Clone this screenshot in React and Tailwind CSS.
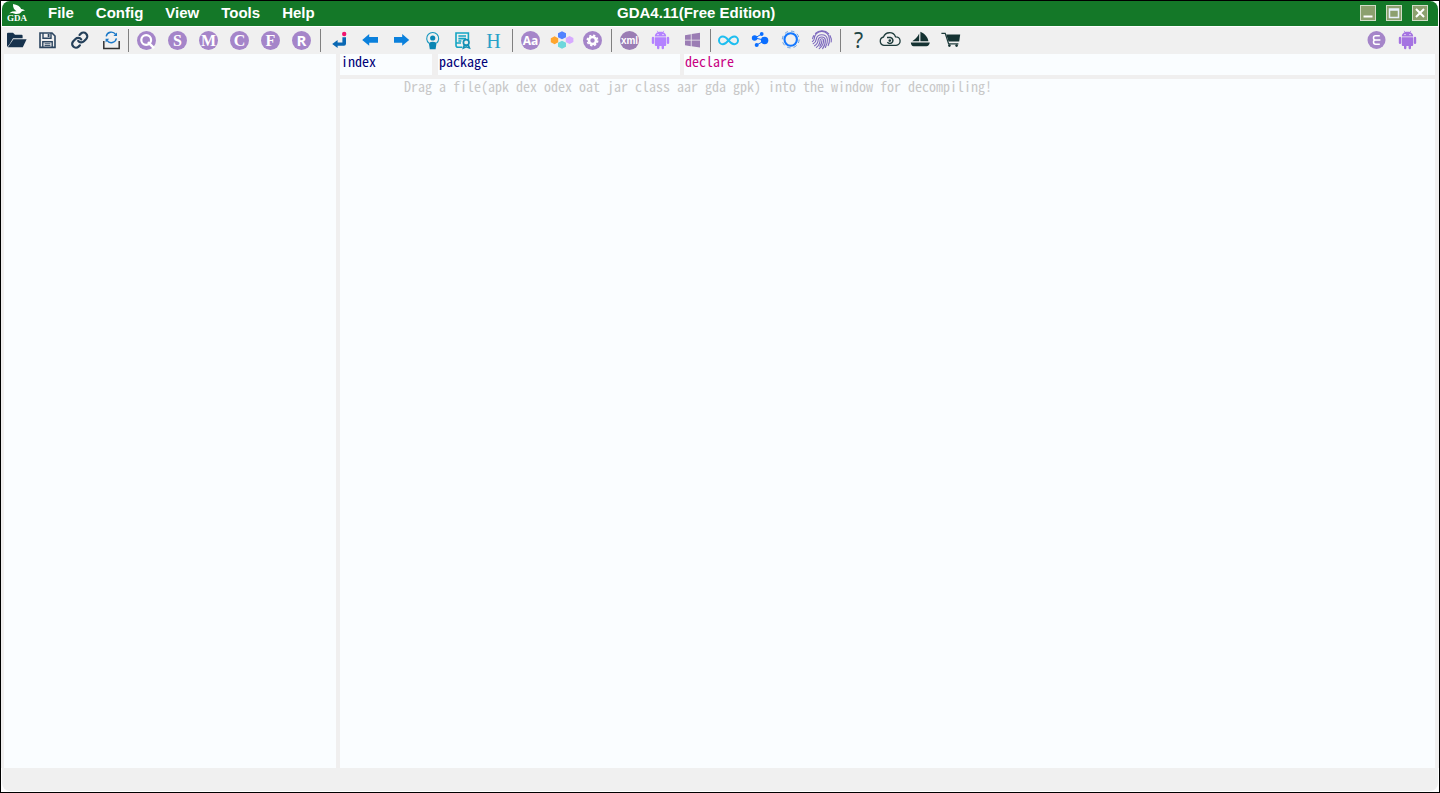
import React from 'react';

const Icon = ({ children }) => (
    <svg width="21" height="21" viewBox="0 0 21 21" fill="none" className="overflow-visible" aria-hidden="true">
        {children}
    </svg>
);

const Badge = ({ children, className = 'bg-[#a585c9]' }) => (
    <span className={`flex h-[19px] w-[19px] items-center justify-center rounded-full font-bold leading-none text-white ${className}`}>
        {children}
    </span>
);

const serif = "bg-[#a585c9] font-['Liberation_Serif',serif] text-[16px]";

const Android = ({ color }) => (
    <Icon>
        <g fill={color}>
            <path d="M4.8 6.6C4.8 3.6 7.2 1.8 10.5 1.8s5.7 1.8 5.7 4.8z" />
            <path d="M7.2 0.8l1.2 2M13.8 0.8l-1.2 2" stroke={color} strokeWidth="0.8" />
            <path d="M4.8 7.2h11.4v7.800a1 1 0 0 1-1 1H5.8a1 1 0 0 1-1-1z" />
            <rect x="1.800" y="6.800" width="2.4" height="7.200" rx="1.2" />
            <rect x="16.8" y="6.800" width="2.4" height="7.200" rx="1.2" />
            <rect x="7" y="14" width="2.4" height="5.2" rx="1.2" />
            <rect x="11.6" y="14" width="2.4" height="5.2" rx="1.2" />
        </g>
        <circle cx="8" cy="4.6" r="0.7" fill="#fff" />
        <circle cx="13" cy="4.6" r="0.7" fill="#fff" />
    </Icon>
);

const groups = [
    [
        {
            label: 'Open',
            icon: (
                <Icon>
                    <path fill="#17324d" d="M1 3.8a1 1 0 0 1 1-1h5l2 2h6.6a1 1 0 0 1 1 1v2.4H7L3.4 14.4 1 17z" />
                    <path fill="#17324d" d="M7.4 9.2h13.2l-3.8 8H1.8z" />
                </Icon>
            ),
        },
        {
            label: 'Save',
            icon: (
                <Icon>
                    <path stroke="#2c4560" strokeWidth="1.6" d="M3 3h12l3 3v11.4H3z" />
                    <path stroke="#2c4560" strokeWidth="1.4" d="M6 3v5.2h8V3M5.8 17.4v-5.6h9.4v5.6" />
                    <path stroke="#2c4560" strokeWidth="1.8" d="M11.6 4v3" />
                    <path stroke="#2c4560" strokeWidth="1" d="M7.6 13.8h5.8M7.6 15.6h5.8" />
                </Icon>
            ),
        },
        {
            label: 'Link',
            icon: (
                <Icon>
                    <g transform="translate(2.6 1) scale(.76)" stroke="#24405a" strokeWidth="2.9" strokeLinecap="round">
                        <path d="M10 13a5 5 0 0 0 7.54.54l3-3a5 5 0 0 0-7.07-7.07l-1.72 1.71" />
                        <path d="M14 11a5 5 0 0 0-7.54-.54l-3 3a5 5 0 0 0 7.07 7.07l1.71-1.71" />
                    </g>
                </Icon>
            ),
        },
        {
            label: 'Reload',
            icon: (
                <Icon>
                    <path stroke="#333" strokeWidth="1.5" d="M4.800 11v7.400h15.400V11" />
                    <path stroke="#1a78c8" strokeWidth="1.4" d="M7.2 6.4a5.2 5.2 0 0 1 9.400-2M17.400 8.400a5.2 5.2 0 0 1-9.400 2" />
                    <path fill="#1a78c8" d="M18 2.400v3.600h-3.600zM6.600 12.400V8.800h3.600z" />
                </Icon>
            ),
        },
    ],
    [
        {
            label: 'Search',
            icon: (
                <Icon>
                    <circle cx="10.5" cy="10.5" r="9.5" fill="#a585c9" />
                    <circle cx="10.2" cy="10" r="4.9" stroke="#fff" strokeWidth="2.2" />
                    <path stroke="#fff" strokeWidth="2.6" d="M12 12.2l6 6" />
                </Icon>
            ),
        },
        { label: 'Strings', icon: <Badge className={serif}>S</Badge> },
        { label: 'Methods', icon: <Badge className={serif}>M</Badge> },
        { label: 'Classes', icon: <Badge className={serif}>C</Badge> },
        { label: 'Fields', icon: <Badge className={serif}>F</Badge> },
        { label: 'References', icon: <Badge className="bg-[#a585c9] font-['Open_Sans',sans-serif] text-[15px]">R</Badge> },
    ],
    [
        {
            label: 'Go to',
            icon: (
                <Icon>
                    <circle cx="16.2" cy="4" r="2.2" fill="#f0146e" />
                    <path fill="#0a68b4" d="M14.4 7.2h3.6v6.6a2 2 0 0 1-2 2H9.6v2.2L4.2 14l5.4-4v2.4h4.8z" />
                </Icon>
            ),
        },
        { label: 'Back', icon: <Icon><path fill="#0a80dc" d="M3.2 9.9l7-5.8v3H19v5.6h-8.8v3z" /></Icon> },
        { label: 'Forward', icon: <Icon><path fill="#0a80dc" d="M19.2 9.9l-7-5.8v3H4v5.6h8.2v3z" /></Icon> },
        {
            label: 'Entry point',
            icon: (
                <Icon>
                    <path stroke="#1496be" strokeWidth="1.1" d="M8 13.2a6 6 0 1 1 7.400 0" />
                    <circle cx="11.7" cy="8" r="2.6" fill="#0a86b4" />
                    <path fill="#0a86b4" d="M8 14c0-1.500 1.4-2.2 3.7-2.2s3.7.7 3.7 2.2L14.600 19.200H8.8z" />
                </Icon>
            ),
        },
        {
            label: 'Certificate',
            icon: (
                <Icon>
                    <path stroke="#14a5c3" strokeWidth="1.6" d="M10.4 17.2H6a2 2 0 0 1-2-2V3h12.4v7M4 13h5" />
                    <path stroke="#14a5c3" strokeWidth="1.6" d="M6.4 6h7.6M6.4 8.6h7.6M6.4 11h3" />
                    <circle cx="14.2" cy="12.4" r="2.8" stroke="#1490b4" strokeWidth="1.7" />
                    <path stroke="#1490b4" strokeWidth="1.6" d="M12.400 14.8l-1 3.2 2.8-1.2 3.200 1.2-1.2-3.2" />
                </Icon>
            ),
        },
        { label: 'Hex', icon: <span className="font-['Liberation_Serif',serif] text-[20px] leading-none text-[#28a0c8]">H</span> },
    ],
    [
        { label: 'Font', icon: <Badge className="bg-[#a585c9] font-['Open_Sans',sans-serif] text-[12px]">Aa</Badge> },
        {
            label: 'Call graph',
            icon: (
                <Icon>
                    <path fill="#ffa52d" d="M3.6 6.2l3.6 2v4l-3.6 2-3.8-2v-4z" />
                    <path fill="#5082ff" d="M11 1.2l4 2v4l-4 2-4-2v-4z" />
                    <path fill="#6ed7dc" d="M11 10.8l4 2v4l-4 2-4-2v-4z" />
                    <path fill="#d7aaff" d="M18.6 6l3.8 2v4l-3.8 2-3.8-2V8z" />
                </Icon>
            ),
        },
        {
            label: 'Settings',
            icon: (
                <Icon>
                    <circle cx="10.5" cy="10.5" r="9.5" fill="#a585c9" />
                    <circle cx="10.5" cy="10.5" r="3.5" stroke="#fff" strokeWidth="2.6" />
                    <circle cx="10.5" cy="10.5" r="5.200" stroke="#fff" strokeWidth="1.6" strokeDasharray="2.2 1.884" />
                </Icon>
            ),
        },
    ],
    [
        { label: 'Manifest xml', icon: <Badge className="bg-[#9b7db4] font-['Liberation_Sans',sans-serif] text-[10px]">xml</Badge> },
        { label: 'APK info', icon: <Android color="#b482ff" /> },
        { label: 'Windows', icon: <Icon><path fill="#9b7db4" d="M4 5.2l5.8-1v5.6H4zM10.6 4l8.4-1.2v7h-8.4zM4 10.6h5.8v5.6l-5.8-1zM10.6 10.6H19v6.8l-8.4-1.2z" /></Icon> },
    ],
    [
        {
            label: 'Loop',
            icon: (
                <Icon>
                    <path stroke="#1ebef0" strokeWidth="2" d="M10.5 10.4C8.4 7.8 6.8 6.6 4.8 6.6a3.8 3.8 0 0 0 0 7.6c2 0 3.6-1.2 5.7-3.8 2.1-2.6 3.7-3.8 5.7-3.8a3.8 3.8 0 0 1 0 7.6c-2 0-3.6-1.2-5.7-3.8z" />
                </Icon>
            ),
        },
        {
            label: 'Data flow',
            icon: (
                <Icon>
                    <path stroke="#0a6eff" strokeWidth="1" d="M12.7 4L6 8l10 2.3L7.7 15" />
                    <g fill="#0a6eff">
                        <circle cx="5.600" cy="8" r="2.800" />
                        <circle cx="12.7" cy="4" r="1.9" />
                        <circle cx="15.600" cy="10.5" r="3.7" />
                        <circle cx="7.7" cy="15" r="2" />
                    </g>
                </Icon>
            ),
        },
        {
            label: 'Scan',
            icon: (
                <Icon>
                    <circle cx="10.7" cy="9.5" r="6.2" stroke="#1478ff" strokeWidth="2.100" />
                    <circle cx="10.7" cy="9.5" r="8.4" stroke="#5a96dc" strokeWidth="0.9" strokeDasharray="3.6 3" />
                </Icon>
            ),
        },
        {
            label: 'Fingerprint',
            icon: (
                <Icon>
                    <g stroke="#7d69be" strokeWidth="1.1" strokeLinecap="round">
                        <path d="M4.4 3.4a9.4 9.4 0 0 1 13.4.4M1.6 8.6a9.4 9.4 0 0 1 1.2-3M19 5.6a9.4 9.4 0 0 1 1.2 6.4" />
                        <path d="M1.4 11.6c1.2-.6 1.6-1.4 1.8-2.6A7.6 7.6 0 0 1 18.4 9c.2 2.4-.2 4.6-1.2 6.6" />
                        <path d="M2.2 13.8c2-1 2.8-2.4 3-4.4a5.7 5.7 0 0 1 11.2 0c.2 3-.6 5.6-2 8" />
                        <path d="M3.6 15.8c2.4-1.4 3.4-3.4 3.6-6a3.7 3.7 0 0 1 7.2 0c.2 3.4-.8 6.2-2.8 8.8" />
                        <path d="M5.4 17.4c2.6-2 3.6-4.4 3.7-7.2a1.8 1.8 0 0 1 3.5 0c0 3.4-1.4 6.2-4.4 8.4" />
                        <path d="M10.9 10.6c0 2.2-.8 4-2 5.6" />
                    </g>
                </Icon>
            ),
        },
    ],
    [
        { label: 'Help', icon: <span className="font-['Noto_Sans',sans-serif] text-[21px] leading-none text-[#1e4646]">?</span> },
        {
            label: 'Cloud update',
            icon: (
                <Icon>
                    <path stroke="#1e3c3c" strokeWidth="1.3" d="M4.800 15.4a4.3 4.3 0 0 1-.3-8.4 6.4 6.4 0 0 1 12-.2 4.3 4.3 0 0 1 .6 8.6z" />
                    <path stroke="#1e3c3c" strokeWidth="1.5" d="M8 7.6h3.400a3 3 0 1 1-3 4.6" />
                    <circle cx="10.8" cy="10.6" r="1.3" fill="#1e3c3c" />
                </Icon>
            ),
        },
        {
            label: 'Home page',
            icon: (
                <Icon>
                    <path fill="#143232" d="M9.2 3.6v7.6H2.2c2.8-1.6 5.4-4.2 7-7.6zM10.4 1.8c4 1.6 7.4 5 8 9.4h-8z" />
                    <path fill="#143232" d="M.8 12.4h19c-.4 2-1.6 3.8-3.4 3.8H3.6C2 16.2 1 14.6.8 12.4z" />
                </Icon>
            ),
        },
        {
            label: 'Buy',
            icon: (
                <Icon>
                    <path stroke="#1e3c3c" strokeWidth="1.2" d="M.4 3.4h3.8l3.4 10.4h9.8" />
                    <path fill="#143232" d="M5.2 4.4h14l-1 7.2H7.6z" />
                    <circle cx="8.4" cy="15.6" r="1.3" fill="#143232" />
                    <circle cx="15.6" cy="15.6" r="1.3" fill="#143232" />
                </Icon>
            ),
        },
    ],
];

const rightTools = [
    {
        label: 'Engine',
        icon: (
            <Icon>
                <circle cx="10.5" cy="10" r="9" fill="#a585c9" />
                <path stroke="#fff" strokeWidth="1.5" d="M13.800 5.800H9.600a2.100 2.100 0 0 0 0 4.200h4.800M9.600 10a2.100 2.100 0 0 0 0 4.200h4.200" />
            </Icon>
        ),
    },
    { label: 'Device', icon: <Android color="#a573e1" /> },
];

const menus = ['File', 'Config', 'View', 'Tools', 'Help'];

const windowControls = [
    { label: 'Minimize', shape: <path d="M3.5 11.500h9" stroke="#fff" strokeWidth="2" /> },
    { label: 'Maximize', shape: <path d="M3.5 4h9v8.5h-9zM3.5 5h9" stroke="#e6f0fa" strokeWidth="1.5" /> },
    { label: 'Close', shape: <path d="M4 4l8 8M12 4l-8 8" stroke="#fff" strokeWidth="2" /> },
];

const ToolButton = ({ tool }) => (
    <button type="button" aria-label={tool.label} className="flex h-[27px] w-[31px] shrink-0 items-center justify-center">
        {tool.icon}
    </button>
);

const Logo = () => (
    <div className="relative h-[19px] w-[22px]">
        <svg width="22" height="12" viewBox="0 0 22 12" aria-hidden="true">
            <path fill="#fff" d="M7 0c4.2.6 7.2 2.4 8.2 5 1.4.2 3 .8 4 2-1.6-.4-2.8-.2-3.6.6-1 2-3 2.6-6 2.4L6.4 9l-3.200.200 3-1.6 4.400-.4C8.2 6 6.8 3.4 7 0z" />
        </svg>
        <span className="absolute bottom-px left-px font-['Liberation_Serif',serif] text-[9px] font-bold leading-[8px] text-white">GDA</span>
    </div>
);

const App = () => {
    return (
        <div className="flex h-screen flex-col border border-black bg-white">
            {/* Title bar */}
            <header className="mx-px mb-px flex h-[25px] shrink-0 items-center rounded-t-[8px] bg-[#147828] pr-[10px] font-['Liberation_Sans',Arial,sans-serif] text-[15px] font-bold text-white">
                <div className="flex w-[615px] shrink-0 items-center gap-5 pl-1">
                    <Logo />
                    <nav className="flex gap-[22px]">
                        {menus.map((menu) => (
                            <button key={menu} type="button">{menu}</button>
                        ))}
                    </nav>
                </div>
                <h1 className="flex-1">GDA4.11(Free Edition)</h1>
                <div className="flex gap-[10px] pb-px">
                    {windowControls.map((control) => (
                        <button key={control.label} type="button" aria-label={control.label} className="h-4 w-4 bg-[#8ca06e]">
                            <svg width="16" height="16" viewBox="0 0 16 16" fill="none">
                                <rect x=".5" y=".5" width="15" height="15" stroke="#d2dcc8" />
                                {control.shape}
                            </svg>
                        </button>
                    ))}
                </div>
            </header>

            {/* Toolbar */}
            <div className="flex h-[27px] shrink-0 items-center justify-between bg-[#f0f0f0] pr-4">
                <div className="flex items-center">
                    {groups.map((group, i) => (
                        <React.Fragment key={i}>
                            {i > 0 && <span className="mr-[2px] ml-[3px] h-[23px] w-px bg-[#808080]" />}
                            {group.map((tool) => (
                                <ToolButton key={tool.label} tool={tool} />
                            ))}
                        </React.Fragment>
                    ))}
                </div>
                <div className="flex">
                    {rightTools.map((tool) => (
                        <ToolButton key={tool.label} tool={tool} />
                    ))}
                </div>
            </div>

            {/* Workspace */}
            <main className="flex min-h-0 flex-1 gap-1 bg-[#f0efef] pr-1 pl-[3px] font-['Noto_Sans_Mono_CJK_SC','DejaVu_Sans_Mono',monospace] text-[14px] leading-[15px]">
                <aside className="w-[332px] shrink-0 bg-[#fafdff]" />
                <section className="flex min-w-0 flex-1 flex-col gap-1">
                    <div className="flex h-[21px] shrink-0 gap-1 text-[#000078]">
                        <div className="mr-[2px] w-[92px] shrink-0 bg-[#fafdff] pl-px">index</div>
                        <div className="w-[242px] shrink-0 bg-[#fafdff] pl-px">package</div>
                        <div className="flex-1 bg-[#fafdff] pl-px text-[#c80082]">declare</div>
                    </div>
                    <div className="flex-1 bg-[#fafdff] pl-16 text-[#c8c8c8]">
                        Drag a file(apk dex odex oat jar class aar gda gpk) into the window for decompiling!
                    </div>
                </section>
            </main>

            {/* Status bar */}
            <footer className="mx-px mb-px h-[23px] shrink-0 rounded-b-[8px] bg-[#f0f0f0]" />
        </div>
    );
};

export default App;
